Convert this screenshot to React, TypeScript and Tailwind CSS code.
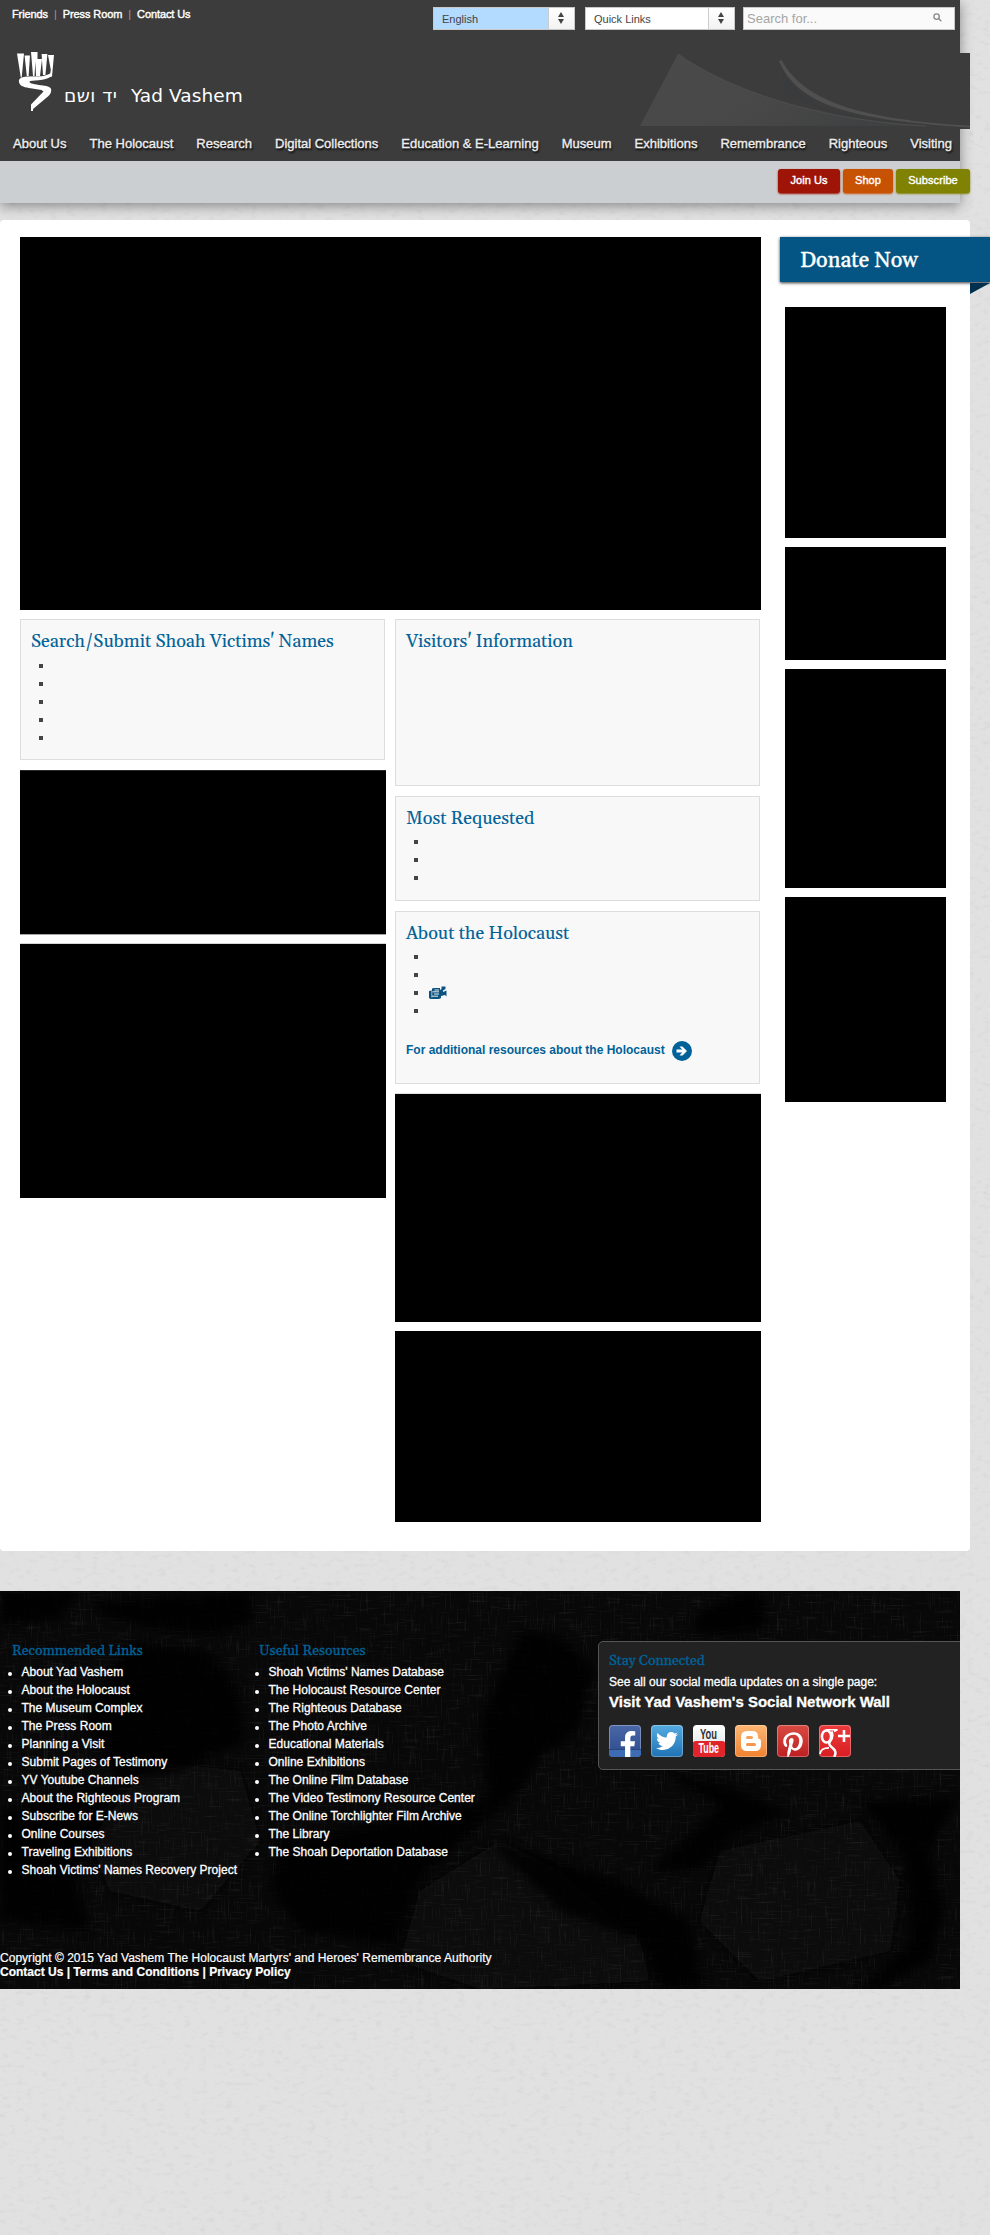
import type { ReactNode } from "react";
import { FaFacebookF, FaPinterestP, FaTwitter } from "react-icons/fa";

const serif = "font-['Gelasio','Georgia','Liberation_Serif',serif]";

const navItems = [
  "About Us",
  "The Holocaust",
  "Research",
  "Digital Collections",
  "Education & E-Learning",
  "Museum",
  "Exhibitions",
  "Remembrance",
  "Righteous",
  "Visiting",
];

const recommended = [
  "About Yad Vashem",
  "About the Holocaust",
  "The Museum Complex",
  "The Press Room",
  "Planning a Visit",
  "Submit Pages of Testimony",
  "YV Youtube Channels",
  "About the Righteous Program",
  "Subscribe for E-News",
  "Online Courses",
  "Traveling Exhibitions",
  "Shoah Victims' Names Recovery Project",
];

const resources = [
  "Shoah Victims' Names Database",
  "The Holocaust Resource Center",
  "The Righteous Database",
  "The Photo Archive",
  "Educational Materials",
  "Online Exhibitions",
  "The Online Film Database",
  "The Video Testimony Resource Center",
  "The Online Torchlighter Film Archive",
  "The Library",
  "The Shoah Deportation Database",
];

function PaperTexture() {
  return (
    <svg className="absolute inset-0 -z-10 h-full w-full" aria-hidden="true">
      <filter id="paper" x="0" y="0" width="100%" height="100%" colorInterpolationFilters="sRGB">
        <feTurbulence type="fractalNoise" baseFrequency="0.12 0.22" numOctaves="4" seed="4" />
        <feColorMatrix values="0 0 0 0 0.7  0 0 0 0 0.7  0 0 0 0 0.7  1.4 0 0 0 -0.74" />
      </filter>
      <rect width="100%" height="100%" fill="#e1e1e1" />
      <rect width="100%" height="100%" filter="url(#paper)" opacity="0.35" />
    </svg>
  );
}

function FabricTexture() {
  return (
    <svg className="absolute inset-0 h-full w-full" viewBox="0 0 960 398" preserveAspectRatio="none" aria-hidden="true">
      <filter id="streakH" x="0" y="0" width="100%" height="100%" colorInterpolationFilters="sRGB">
        <feTurbulence type="fractalNoise" baseFrequency="0.045 0.7" numOctaves="2" seed="3" />
        <feColorMatrix values="0 0 0 0 0.4  0 0 0 0 0.4  0 0 0 0 0.4  2.6 0 0 0 -1.5" />
      </filter>
      <filter id="streakV" x="0" y="0" width="100%" height="100%" colorInterpolationFilters="sRGB">
        <feTurbulence type="fractalNoise" baseFrequency="0.7 0.045" numOctaves="2" seed="8" />
        <feColorMatrix values="0 0 0 0 0.4  0 0 0 0 0.4  0 0 0 0 0.4  2.6 0 0 0 -1.5" />
      </filter>
      <filter id="soft" x="-20%" y="-20%" width="140%" height="140%">
        <feGaussianBlur stdDeviation="5" />
      </filter>
      <rect width="960" height="398" fill="#080808" />
      <g fill="#101010" filter="url(#soft)" opacity="0.8">
        <path d="M150 170L240 180L260 250L200 320L110 300L90 250Z" />
        <path d="M420 300L500 250L560 280L640 350L650 390L480 398L400 370Z" />
        <path d="M720 260L860 230L900 290L890 360L760 390L700 330Z" />
      </g>
      <rect width="960" height="398" filter="url(#streakH)" opacity="0.2" />
      <rect width="960" height="398" filter="url(#streakV)" opacity="0.2" />
      <g fill="#000" filter="url(#soft)" opacity="0.8">
        <path d="M0 0H80L60 28L0 34Z" />
        <path d="M90 10L250 0L252 32L215 44L160 40L100 24Z" />
        <path d="M130 50L210 60L240 100L245 150L180 180L120 190L80 130Z" />
        <path d="M0 220L120 190L95 250L75 280L90 340L0 330Z" />
        <path d="M280 250L440 220L490 205L485 230L420 290L395 356L300 340L270 300Z" />
        <path d="M520 40L560 44L595 80L580 130L570 150L545 160L520 200L490 230L480 130Z" />
        <path d="M700 20L745 0L765 5L765 36L730 44L690 42Z" />
        <path d="M490 250L620 290L690 330L705 398H660L640 350L560 320Z" />
        <path d="M660 180L730 195L790 223L735 245L700 280L650 280L720 215Z" />
        <path d="M860 210L960 205L940 240L930 260L945 320L930 370L880 398H860L910 350L905 270Z" />
      </g>
    </svg>
  );
}

function Logo() {
  return (
    <svg width="38" height="60" viewBox="0 0 38 60" fill="#fff" aria-hidden="true">
      <path d="M0 1.5H7L4.7 25.5L3.8 25.5Z" />
      <path d="M7.6 3.5H13L11.6 24H9.8Z" />
      <path d="M14 0H20.5V7H25L23 24H19L18.4 9.5L17.5 24H16Z" />
      <path d="M24.6 2H30.4L28.4 23H26Z" />
      <path d="M31 3H37L35 24.5L32.6 25L33.8 18Z" />
      <path d="M2 30C1.2 26.5 5 24.8 10 24.5L25 24.2C29 23.6 32 22 34.9 20.5V24C31 26.5 27 28 21.5 28.3C17 28.6 13.5 28.7 12.3 29.8C12.5 31.5 18 32.5 24 33.3C29 34 34 34.6 34.2 37.5C34.4 40 33.5 42 31.5 44L16 57V59H14V52.5L26.5 39.5L24.5 38L12 36C6 35 2.5 33.5 2 30Z" />
    </svg>
  );
}

function Swoosh() {
  return (
    <svg className="ml-auto" width="352" height="76" viewBox="0 0 352 76" aria-hidden="true">
      <defs>
        <linearGradient id="sail" x1="0" x2="1" y1="0" y2="0.4">
          <stop offset="0" stopColor="#4a4a4a" />
          <stop offset="0.6" stopColor="#484848" />
          <stop offset="1" stopColor="#404142" />
        </linearGradient>
      </defs>
      <path d="M163 12C178 55 210 60 300 72L220 62L168 43Z" fill="#393b3d" />
      <path d="M22 73L60 1C104 32 186 66 308 73Z" fill="url(#sail)" />
      <path d="M60 1C104 32 186 66 308 73" fill="none" stroke="#4e4e4e" />
      <path d="M161 8C180 52 232 67 352 74.5V72.8C240 66 186 48 163.5 7Z" fill="#505050" />
    </svg>
  );
}

function Select({ label, width, tone }: { label: string; width: string; tone: string }) {
  return (
    <div className={`flex h-[23px] border border-[#c8c8c8] ${width}`}>
      <div className={`flex-1 pl-2 text-[11px] leading-[22px] text-[#444] ${tone}`}>{label}</div>
      <div className="flex w-[26px] items-center justify-center border-l border-[#ccc] bg-gradient-to-b from-white to-[#f3f3f3] pr-0.5 pb-0.5">
        <svg width="6" height="12" viewBox="0 0 6 12" fill="#444">
          <path d="M3 0L6 5H0ZM3 12L6 7H0Z" />
        </svg>
      </div>
    </div>
  );
}

function Pill({ children, className }: { children: ReactNode; className: string }) {
  return (
    <span
      className={`h-6 rounded-[3px] text-center text-[11px] leading-[22px] tracking-[0.08px] text-white [-webkit-text-stroke:0.4px_#fff] ${className}`}
    >
      {children}
    </span>
  );
}

function Card({ title, className, children }: { title: string; className: string; children?: ReactNode }) {
  return (
    <section className={`w-[365px] border border-[#ddd] bg-[#f8f8f8] px-[10px] ${className}`}>
      <h2
        className={`mt-[10px] text-[18px] leading-6 whitespace-nowrap text-[#006299] [-webkit-text-stroke:0.1px_#006299] ${serif}`}
      >
        {title}
      </h2>
      {children}
    </section>
  );
}

function Bullets({ count, iconAt }: { count: number; iconAt?: number }) {
  return (
    <ul className="mt-[3px]">
      {Array.from({ length: count }, (_, i) => (
        <li key={i} className="flex h-[18px] items-center pl-2">
          <span className="size-1 bg-[#444]" />
          {i === iconAt && (
            <svg className="-mt-px ml-[11px]" width="18" height="13" viewBox="0 0 18 13" aria-hidden="true">
              <path d="M0 5L3 4.500V2.500L5 2H11V4L12.500 3V0.500H16.500V3L14 4.500V6L17.500 4.500V10.500L16 9L12 10V12L10 13H1.500L0 12Z" fill="#0b5480" />
              <path d="M5.500 4H10M3.500 5.800H10M5 8H10M3 10.200H9" stroke="#f8f8f8" strokeWidth="0.9" />
              <path d="M2.800 5V11.500" stroke="#f8f8f8" strokeWidth="0.6" />
            </svg>
          )}
        </li>
      ))}
    </ul>
  );
}

function LinkColumn({ title, links, className }: { title: string; links: string[]; className: string }) {
  return (
    <div className={`shrink-0 ${className}`}>
      <h3 className={`pl-3 text-[14px] leading-5 text-[#006299] ${serif}`}>{title}</h3>
      <ul className="mt-[2px]">
        {links.map((link) => (
          <li
            key={link}
            className="flex h-[18px] items-center pl-2 text-[12px] leading-[18px] tracking-[0.02px] whitespace-nowrap"
          >
            <span className="mt-[3px] mr-[9.5px] size-1 rounded-full bg-white" />
            {link}
          </li>
        ))}
      </ul>
    </div>
  );
}

function SocialTile({ children, className }: { children: ReactNode; className: string }) {
  return (
    <span
      className={`relative flex size-8 items-center justify-center rounded-[4px] text-white shadow-[inset_0_0_0_1px_rgba(255,255,255,0.3)] ${className}`}
    >
      {children}
    </span>
  );
}

function Social() {
  return (
    <div className="mt-[13px] flex gap-[10px]">
      <SocialTile className="overflow-hidden bg-gradient-to-b from-[#4a67a6] to-[#2d4a8e]">
        <span className="absolute inset-x-0 bottom-0 h-2 border-t border-[#2a4580] bg-[#3d6cb5]" />
        <FaFacebookF className="absolute top-[6px] left-[8px] h-[27px] w-[22px]" />
      </SocialTile>
      <SocialTile className="bg-gradient-to-b from-[#55ace0] to-[#1e72b4]">
        <FaTwitter className="size-[22px]" />
      </SocialTile>
      <SocialTile className="bg-gradient-to-b from-white to-[#d5dde0]">
        <svg
          width="32"
          height="32"
          viewBox="0 0 32 32"
          className="overflow-visible font-['Liberation_Sans_Narrow','Liberation_Sans',sans-serif] font-bold [-webkit-text-stroke:0]"
        >
          <path d="M0 18Q0 16 3 16H29Q32 16 32 18V28Q32 32 28 32H4Q0 32 0 28Z" fill="#e0242a" />
          <text x="7" y="13.5" fontSize="14" textLength="17" lengthAdjust="spacingAndGlyphs" fill="#333">
            You
          </text>
          <text x="5.5" y="28.3" fontSize="14" textLength="20.5" lengthAdjust="spacingAndGlyphs" fill="#fff">
            Tube
          </text>
        </svg>
      </SocialTile>
      <SocialTile className="bg-gradient-to-b from-[#fbb673] to-[#f0812c]">
        <svg width="20" height="20" viewBox="0 0 20 20" aria-hidden="true">
          <path
            fillRule="evenodd"
            fill="#fff"
            d="M6 0H11.5Q17 0 17 5.5Q17 8 18.5 8Q20 8.2 20 10V14Q20 20 14 20H6Q0 20 0 14V6Q0 0 6 0ZM6.5 5A1.5 1.5 0 0 0 6.5 8H10.5A1.5 1.5 0 0 0 10.5 5ZM6.5 12A1.5 1.5 0 0 0 6.5 15H13.5A1.5 1.5 0 0 0 13.5 12Z"
          />
        </svg>
      </SocialTile>
      <SocialTile className="overflow-hidden bg-gradient-to-b from-[#d84a42] to-[#bd1d22]">
        <FaPinterestP className="mt-2 size-[26px]" />
      </SocialTile>
      <SocialTile className="overflow-hidden bg-gradient-to-b from-[#ea3a3c] to-[#d91c23]">
        <svg width="32" height="32" viewBox="0 0 32 32" fill="none" stroke="#fff" aria-hidden="true">
          <ellipse cx="7.5" cy="11.5" rx="4.6" ry="6" strokeWidth="2.6" />
          <path d="M7 4.8H18.5L15 6.5" strokeWidth="1.4" />
          <path d="M12.5 6.5C14 10 13.500 14 10.5 17.500C9.5 19.500 11 21 13 22.5C17 25.5 17.5 28.5 15 32" strokeWidth="2.4" />
          <path d="M10 22.8C5 22.8 1.5 24.5 1 29" strokeWidth="1.8" />
          <path d="M25 5V17M19 11H31" strokeWidth="2.6" />
        </svg>
      </SocialTile>
    </div>
  );
}

export default function App() {
  return (
    <div className="relative isolate h-[2235px] w-[990px] overflow-hidden font-['Liberation_Sans',Arial,sans-serif] text-[#444]">
      <PaperTexture />

      <header className="h-[203px] w-[960px] bg-[#cccfd2] shadow-[0_3px_12px_rgba(0,0,0,0.4)]">
        <div className="flex h-[53px] bg-[#3c3c3c]">
          <div className="flex h-7 w-[433px] items-center gap-[6px] pl-3 text-[11px] tracking-[-0.1px] text-white [-webkit-text-stroke:0.4px_#fff]">
            <span>Friends</span>
            <span className="text-[#a09a94] [-webkit-text-stroke:0]">|</span>
            <span>Press Room</span>
            <span className="text-[#a09a94] [-webkit-text-stroke:0]">|</span>
            <span>Contact Us</span>
          </div>
          <div className="mt-[7px] flex">
            <Select label="English" width="w-[142px]" tone="bg-[#b3daff]" />
            <div className="ml-[10px]">
              <Select label="Quick Links" width="w-[150px]" tone="bg-white" />
            </div>
            <div className="ml-2 flex h-[23px] w-[212px] items-center justify-between border border-[#c8c8c8] bg-[#fafafa] pr-3 pl-[3px] text-[13px] text-[#a5a5a5]">
              <span>Search for...</span>
              <svg
                width="9"
                height="9"
                viewBox="0 0 10 10"
                fill="none"
                stroke="#8a8a8a"
                strokeWidth="1.5"
                className="-mt-0.5"
              >
                <circle cx="4" cy="4" r="3" />
                <path d="M6.2 6.2L9.2 9.2" />
              </svg>
            </div>
          </div>
        </div>

        <div className="flex h-[76px] w-[970px] bg-[#3c3c3c]">
          <div className="-mt-px ml-[17px]">
            <Logo />
          </div>
          <div className="mt-[31px] ml-[8.5px] flex font-['DejaVu_Sans',sans-serif] text-[18.5px] leading-6 whitespace-nowrap text-white">
            <span className="w-[54px] tracking-[0.5px]" dir="rtl">
              יד ושם
            </span>
            <span className="ml-[13.5px] tracking-[0.08px]">Yad Vashem</span>
          </div>
          <Swoosh />
        </div>

        <nav className="flex h-8 justify-between bg-[#3c3c3c] pr-[8px] pl-[13px] text-[13px] leading-[29px] whitespace-nowrap text-[#eee] [-webkit-text-stroke:0.35px_#eee] [text-shadow:1px_2px_2px_#000]">
          {navItems.map((item) => (
            <span key={item}>{item}</span>
          ))}
        </nav>

        <div className="flex w-[970px] justify-end gap-[3px] pt-2">
          <Pill className="w-[62px] bg-[#9e1507] shadow-[0_1px_2px_#9e1507]">Join Us</Pill>
          <Pill className="w-[50px] bg-[#c85204] shadow-[0_1px_2px_#c85204]">Shop</Pill>
          <Pill className="w-[74px] bg-[#808203] shadow-[0_1px_2px_#808203]">Subscribe</Pill>
        </div>
      </header>

      <main className="mt-[17px] flex h-[1331px] w-[970px] rounded-[4px] bg-white pt-[17px] pl-5">
        <div className="w-[741px]">
          <div className="h-[373px] bg-black" />
          <div className="mt-[9px] flex gap-[9px]">
            <div className="w-[366px]">
              <Card title="Search/Submit Shoah Victims' Names" className="h-[141px]">
                <Bullets count={5} />
              </Card>
              <div className="mt-[10px] h-[165px] border-t border-b border-t-[#2a2a2a] border-b-[#a5a5a5] bg-black" />
              <div className="mt-2 h-[255px] border-t border-[#d5d5d5] bg-black" />
            </div>
            <div className="w-[366px]">
              <Card title="Visitors' Information" className="h-[167px]" />
              <Card title="Most Requested" className="mt-[10px] h-[105px]">
                <div className="-mt-px">
                  <Bullets count={3} />
                </div>
              </Card>
              <Card title="About the Holocaust" className="mt-[10px] h-[173px]">
                <div className="-mt-px">
                  <Bullets count={4} iconAt={2} />
                </div>
                <div className="mt-[21px] flex h-5 items-center gap-[7px] text-[12px] font-bold whitespace-nowrap text-[#006299]">
                  <span className="-mt-[3px]">For additional resources about the Holocaust</span>
                  <svg width="20" height="20" viewBox="0 0 20 20" aria-hidden="true">
                    <circle cx="10" cy="10" r="10" fill="#006299" />
                    <path d="M4.5 10H13" stroke="#fff" strokeWidth="3" />
                    <path d="M7.500 5.500H10.500L15 10L10.500 14.500H7.500L11.500 10Z" fill="#fff" />
                  </svg>
                </div>
              </Card>
              <div className="mt-[9px] h-[229px] border-t border-[#e0e0e0] bg-black" />
              <div className="mt-[9px] h-[191px] bg-black" />
            </div>
          </div>
        </div>

        <aside className="ml-[19px] w-[210px] shrink-0">
          <div
            className={`h-[45px] bg-[#045583] pl-5 text-[21.5px] leading-[48px] text-white shadow-[0_1px_3px_rgba(0,0,0,0.8)] [-webkit-text-stroke:0.4px_#fff] ${serif}`}
          >
            Donate Now
          </div>
          <svg className="mt-px ml-[190px]" width="20" height="11" viewBox="0 0 20 11" aria-hidden="true">
            <path d="M0 0H20L0 11Z" fill="#00304d" />
          </svg>
          <div className="mt-[13px] ml-[5px] flex w-[161px] flex-col gap-[9px]">
            <div className="h-[231px] bg-black" />
            <div className="h-[113px] bg-black" />
            <div className="h-[219px] bg-black" />
            <div className="h-[205px] bg-black" />
          </div>
        </aside>
      </main>

      <footer className="relative mt-[40px] h-[398px] w-[960px] overflow-hidden bg-black text-[12px] text-white">
        <FabricTexture />
        <div className="relative flex h-[360px] pt-[50px] [-webkit-text-stroke:0.3px]">
          <LinkColumn title="Recommended Links" links={recommended} className="w-[247px]" />
          <LinkColumn title="Useful Resources" links={resources} className="w-[351px]" />
          <section className="h-[129px] w-[380px] shrink-0 rounded-[5px] border border-[#555] bg-[#222] px-[10px] whitespace-nowrap">
            <h3 className={`mt-[9px] text-[14px] leading-5 text-[#006299] ${serif}`}>Stay Connected</h3>
            <p className="mt-0.5 leading-[18px]">See all our social media updates on a single page:</p>
            <p className="mt-px text-[15px] leading-5 font-bold">Visit Yad Vashem's Social Network Wall</p>
            <Social />
          </section>
        </div>
        <div className="relative leading-[14px] [-webkit-text-stroke:0.2px_#fff]">
          <p className="tracking-[0.025px]">
            Copyright © 2015 Yad Vashem The Holocaust Martyrs' and Heroes' Remembrance Authority
          </p>
          <p className="font-bold">Contact Us | Terms and Conditions | Privacy Policy</p>
        </div>
      </footer>
    </div>
  );
}
